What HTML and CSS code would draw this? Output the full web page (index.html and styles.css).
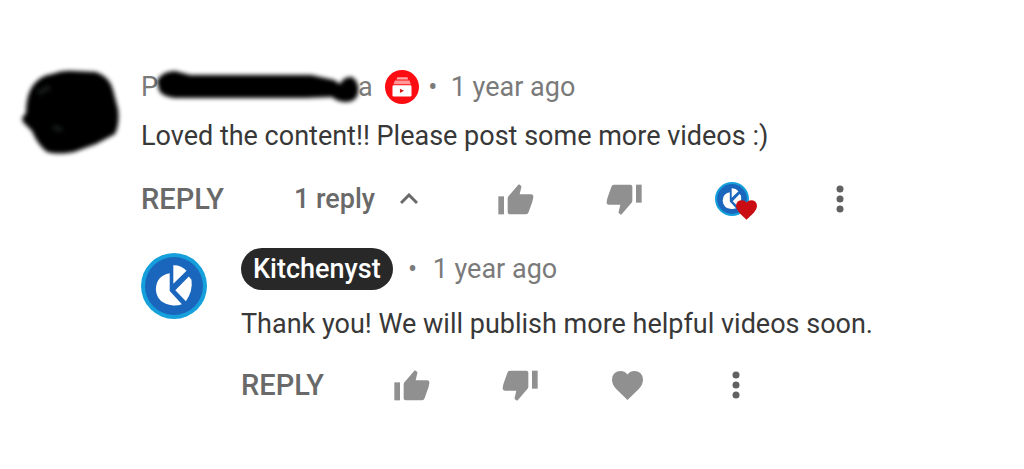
FILE: index.html
```html
<!DOCTYPE html>
<html lang="en">
<head>
<meta charset="utf-8">
<title>Comments</title>
<meta name="viewport" content="width=device-width, initial-scale=1">
<link rel="stylesheet" href="styles.css">
</head>
<body>
<svg class="defs" aria-hidden="true">
  <defs>
    <symbol id="thumb" viewBox="0 0 108 93">
      <path d="M1 37h17v54H1z"/>
      <path d="M29 43q0-4 3-7L61 2q2-2 4 0l4 3q2 2 1 5l-5 21h34q8 0 7 9-1 6-3 13L92 84q-2 7-8 7H35q-6 0-6-6z"/>
    </symbol>
    <symbol id="dots" viewBox="0 0 8 28">
      <circle cx="4" cy="4" r="3.5"/><circle cx="4" cy="14" r="3.5"/><circle cx="4" cy="24" r="3.5"/>
    </symbol>
    <symbol id="heart" viewBox="0 0 92 86">
      <path d="M46 86 14 55Q0 41 0 26 0 13 8 6 15 0 25 0 38 0 46 10 54 0 67 0 77 0 84 6 92 13 92 26 92 41 78 55z"/>
    </symbol>
    <symbol id="brand" viewBox="0 0 200 200">
      <circle cx="100" cy="100" r="100" fill="#15a0dc"/>
      <circle cx="100" cy="100" r="88" fill="#1b66bd"/>
      <g fill="#fff">
        <path d="M87 61v54l37 40q-12 5-27 4-49-5-52-49 1-41 42-49z"/>
        <path d="M98 37q24-1 40 17L98 93z"/>
        <path d="m145 71 8 10q5 33-17 65l-32-33z"/>
      </g>
    </symbol>
  </defs>
</svg>
<main class="thread">
  <svg class="avatar" viewBox="0 0 100 88" role="img" aria-label="Hidden avatar">
    <path class="scribble" d="M32 6Q43 2 54 3L76 4Q90 9 93 22L98 41Q100 55 95 66L76 76 54 84Q38 87 27 84 17 76 12 63L3 54 2 50 6 45Q6 24 16 14 23 7 32 6z"/>
    <path class="glint" d="M18 25 30 19M33 59 42 62"/>
  </svg>
  <article class="comment">
    <header class="byline">
      <span class="author">P<svg class="redaction" viewBox="0 0 204 38" role="img" aria-label="Name hidden"><path class="scribble" d="M1 13Q6 3 19 3L34 7 155 7 178 12 184 16Q188 8 196 9 204 14 202 26 199 35 188 34 180 33 176 29L150 30 18 30Q5 28 3 22z"/></svg>a</span>
      <svg class="member" viewBox="0 0 100 100" role="img" aria-label="Member"><circle cx="50" cy="50" r="50" fill="#fb0d12"/><path d="M36 21h30l2 7H34z" fill="#ffaaa8"/><path d="M29 31h43l4 11H25z" fill="#ff9896"/><rect x="22" y="45" width="56" height="33" rx="4" fill="#fff"/><path d="m44 55 12 6-12 7z" fill="#d01a17"/></svg>
      <span class="dot">•</span>
      <a class="time" href="#first">1 year ago</a>
    </header>
    <p class="text" id="first">Loved the content!! Please post some more videos :)</p>
    <div class="actions">
      <button class="reply-btn" type="button">REPLY</button>
      <button class="toggle" type="button">1 reply
        <svg class="caret" viewBox="0 0 18 12" aria-hidden="true"><path d="m1 10 8-8 8 8"/></svg>
      </button>
      <button class="icon after-toggle" type="button" aria-label="Like"><svg class="thumb"><use href="#thumb"/></svg></button>
      <button class="icon" type="button" aria-label="Dislike"><svg class="thumb down"><use href="#thumb"/></svg></button>
      <button class="icon loved" type="button" aria-label="Loved by Kitchenyst"><svg class="brand-small"><use href="#brand"/></svg><svg class="badge"><use href="#heart"/></svg></button>
      <button class="icon" type="button" aria-label="More"><svg class="dots"><use href="#dots"/></svg></button>
    </div>
    <section class="answer">
      <svg class="brand"><use href="#brand"/></svg>
      <article class="comment">
        <header class="byline tall">
          <a class="owner" href="#second">Kitchenyst</a>
          <span class="dot wide">•</span>
          <a class="time" href="#second">1 year ago</a>
        </header>
        <p class="text" id="second">Thank you! We will publish more helpful videos soon.</p>
        <div class="actions">
          <button class="reply-btn" type="button">REPLY</button>
          <button class="icon first" type="button" aria-label="Like"><svg class="thumb"><use href="#thumb"/></svg></button>
          <button class="icon" type="button" aria-label="Dislike"><svg class="thumb down"><use href="#thumb"/></svg></button>
          <button class="icon" type="button" aria-label="Love"><svg class="heart"><use href="#heart"/></svg></button>
          <button class="icon" type="button" aria-label="More"><svg class="dots"><use href="#dots"/></svg></button>
        </div>
      </article>
    </section>
  </article>
</main>
</body>
</html>
```
FILE: styles.css
```css
* { box-sizing: border-box; }
body {
  margin: 0;
  background: #fff;
  color: #383838;
  font-family: Roboto, "Liberation Sans", sans-serif;
}
.defs { position: absolute; width: 0; height: 0; }
svg { display: block; flex: none; }
a { color: inherit; text-decoration: none; }
button {
  padding: 0;
  border: 0;
  background: none;
  color: #696969;
  font: inherit;
  font-weight: 500;
  cursor: pointer;
}

.thread { display: flex; align-items: flex-start; gap: 21px; padding: 68px 20px 64px; }
.avatar { width: 100px; height: 88px; overflow: visible; }
.scribble { fill: #000; filter: blur(2px); }
.glint { fill: none; stroke: #171b1b; stroke-width: 5; filter: blur(2px); }
.comment { flex: 1; min-width: 0; }

.byline { display: flex; align-items: center; height: 38px; color: #7a7a7a; font-size: 27px; }
.author { display: flex; align-items: center; }
.redaction { width: 204px; height: 38px; margin: 0 -2px; overflow: visible; }
.member { width: 34px; height: 34px; margin-left: 12px; }
.dot { width: 28px; font-size: 27px; text-align: center; }
.dot.wide { width: 40px; }
.member + .dot + .time { margin-left: 4px; }
.tall { height: 42px; }
.owner {
  padding: 0 12px;
  border-radius: 21px;
  background: #282828;
  color: #fff;
  font-weight: 500;
  line-height: 42px;
}

.text { margin: 14px 0 0; font-size: 27px; line-height: 32px; }
.actions { display: flex; align-items: center; gap: 72px; height: 40px; margin-top: 27px; }
.reply-btn { font-size: 29px; }
.toggle { display: flex; align-items: center; gap: 25px; margin-left: -2px; font-size: 27px; }
.caret { width: 18px; height: 12px; fill: none; stroke: #696969; stroke-width: 3; }
.icon {
  display: flex;
  flex: none;
  align-items: center;
  justify-content: center;
  width: 36px;
  height: 40px;
  color: #909090;
}
.after-toggle { margin-left: 8px; }
.first { margin-left: -2px; }
.icon svg { fill: currentColor; }
.thumb { width: 36px; height: 31px; }
.down { transform: rotate(180deg); }
.heart { width: 31px; height: 29px; }
.icon .dots { width: 8px; height: 28px; fill: #616161; }
.loved { position: relative; }
.brand-small { width: 34px; height: 34px; }
.icon .badge { position: absolute; right: -7px; bottom: -1px; width: 21px; height: 20px; fill: #c90d12; }

.answer { display: flex; align-items: flex-start; gap: 34px; margin-top: 29px; }
.brand { width: 66px; height: 66px; margin-top: 5px; }
.answer .text { margin-top: 18px; }
.answer .actions { margin-top: 25px; }
```
